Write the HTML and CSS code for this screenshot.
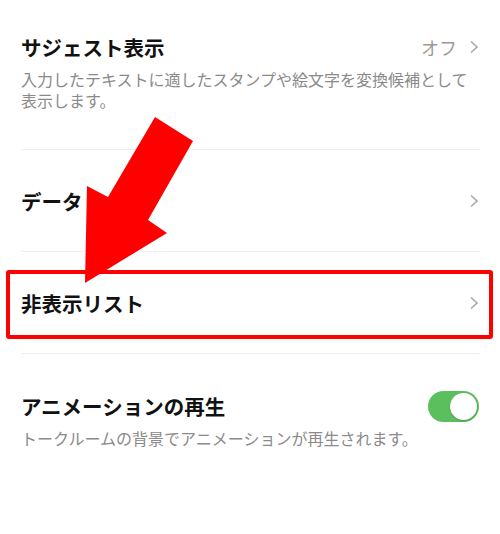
FILE: index.html
```html
<!DOCTYPE html>
<html lang="ja">
<head>
  <meta charset="UTF-8">
  <meta name="viewport" content="width=device-width, initial-scale=1.0">
  <title>トーク設定</title>
  <link rel="stylesheet" href="styles.css">
</head>
<body>
  <!-- Einstellungsliste -->
  <ul class="settings">
    <li class="item item-first">
      <div class="row">
        <span class="title">サジェスト表示</span>
        <span class="value">オフ
          <svg class="chevron" viewBox="0 0 10 14"><polyline points="2,1.5 8,7 2,12.5"/></svg>
        </span>
      </div>
      <p class="desc">入力したテキストに適したスタンプや絵文字を変換候補として</p>
      <p class="desc desc-next">表示します。</p>
    </li>
    <li class="item item-link">
      <span class="title">データ</span>
      <svg class="chevron" viewBox="0 0 10 14"><polyline points="2,1.5 8,7 2,12.5"/></svg>
    </li>
    <li class="item item-link">
      <span class="title">非表示リスト</span>
      <svg class="chevron" viewBox="0 0 10 14"><polyline points="2,1.5 8,7 2,12.5"/></svg>
    </li>
    <li class="item item-last">
      <div class="row">
        <span class="title">アニメーションの再生</span>
        <span class="toggle on"><span class="knob"></span></span>
      </div>
      <p class="desc">トークルームの背景でアニメーションが再生されます。</p>
    </li>
  </ul>

  <!-- Markierung -->
  <div class="highlight"></div>
  <svg class="arrow" viewBox="0 0 500 534">
    <polygon points="155,117 193,141 148,220 167,233 85,283 87,186 108,197"/>
  </svg>
</body>
</html>
```

FILE: styles.css
```css
* {
  margin: 0;
  padding: 0;
  box-sizing: border-box;
}

body {
  width: 500px;
  height: 534px;
  background: #fff;
  font-family: "Noto Sans CJK JP", "Noto Sans", sans-serif;
  color: #111;
  overflow: hidden;
  position: relative;
}

/* Liste */
.settings {
  list-style: none;
  margin: 0 20px 0 21px;
}

.item {
  border-bottom: 1px solid #efefef;
}

.item-first {
  padding: 33px 0 38px;
}

.item-link {
  height: 102px;
  display: flex;
  justify-content: space-between;
  align-items: center;
}

.item-last {
  border-bottom: none;
  padding-top: 38px;
}

.row {
  display: flex;
  justify-content: space-between;
  align-items: center;
  height: 28px;
}

.title {
  font-size: 20.5px;
  font-weight: bold;
  line-height: 28px;
}

.value {
  display: flex;
  align-items: center;
  gap: 12px;
  font-size: 18px;
  color: #9a9a9a;
}

.chevron {
  width: 10px;
  height: 14px;
  fill: none;
  stroke: #a8a8a8;
  stroke-width: 1.6;
  margin-right: 1px;
}

.desc {
  margin-top: 8px;
  font-size: 16px;
  line-height: 21px;
  height: 21px;
  color: #8a8a8a;
  white-space: nowrap;
}

.desc-next {
  margin-top: 0;
}

/* Schalter */
.toggle {
  width: 51px;
  height: 31px;
  border-radius: 16px;
  background: #5bbf5e;
  position: relative;
  margin-right: 1px;
}

.knob {
  position: absolute;
  top: 2px;
  right: 2px;
  width: 27px;
  height: 27px;
  border-radius: 50%;
  background: #fff;
  box-shadow: 0 1px 2px rgba(0, 0, 0, 0.2);
}

/* Markierung */
.highlight {
  position: absolute;
  left: 6px;
  top: 270px;
  width: 487px;
  height: 69px;
  border: 4.5px solid #f00;
  border-radius: 3px;
}

.arrow {
  position: absolute;
  left: 0;
  top: 0;
  width: 500px;
  height: 534px;
  fill: #f00;
}
```
